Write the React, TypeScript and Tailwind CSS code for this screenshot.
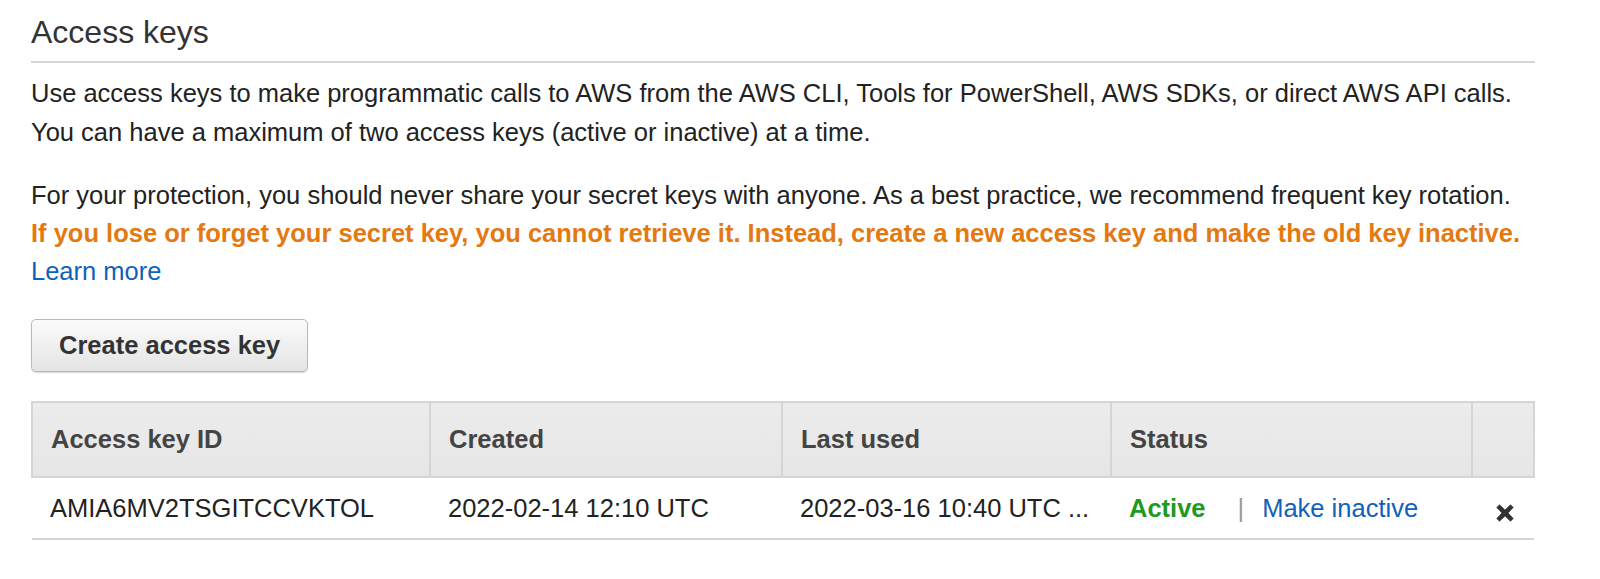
export default function App() {
  return (
    <div className="min-h-screen bg-white" style={{ fontFamily: '"Liberation Sans", Arial, sans-serif' }}>
      <div className="ml-[31px] w-[1504px] text-[#333]">
        <h2 className="pt-[14px] pb-[11px] text-[32px] leading-[36px] font-normal text-[#333] border-b-2 border-[#d5d5d5]">
          Access keys
        </h2>

        <p className="mt-[11px] text-[25.5px] leading-[39px] text-[#222]">
          Use access keys to make programmatic calls to AWS from the AWS CLI, Tools for PowerShell, AWS SDKs, or direct AWS API calls.
          <br />
          You can have a maximum of two access keys (active or inactive) at a time.
        </p>

        <div className="mt-[24px] text-[25.5px] leading-[38px] text-[#222]">
          <p>For your protection, you should never share your secret keys with anyone. As a best practice, we recommend frequent key rotation.</p>
          <p className="font-bold text-[#e47911]">
            If you lose or forget your secret key, you cannot retrieve it. Instead, create a new access key and make the old key inactive.
          </p>
          <a href="#" className="text-[#0f62b8]">Learn more</a>
        </div>

        <button className="mt-[29px] h-[53px] px-[27px] rounded-[5px] border border-[#b8b8b8] bg-gradient-to-b from-[#fbfbfb] to-[#e4e4e4] text-[25.5px] font-bold text-[#333] shadow-[0_1px_1px_rgba(0,0,0,0.15)]">
          Create access key
        </button>

        <table className="mt-[29px] w-full table-fixed border-collapse text-[25.5px]">
          <thead>
            <tr className="h-[75px] bg-gradient-to-b from-[#ececec] to-[#e6e6e6] text-left text-[#444]">
              <th className="w-[398px] border-2 border-[#d5d5d5] pl-[18px] font-bold">Access key ID</th>
              <th className="w-[352px] border-2 border-[#d5d5d5] pl-[18px] font-bold">Created</th>
              <th className="w-[329px] border-2 border-[#d5d5d5] pl-[18px] font-bold">Last used</th>
              <th className="w-[361px] border-2 border-[#d5d5d5] pl-[18px] font-bold">Status</th>
              <th className="border-2 border-[#d5d5d5]"></th>
            </tr>
          </thead>
          <tbody>
            <tr className="h-[62px] border-b-2 border-[#d5d5d5] text-[#222]">
              <td className="pl-[18px] whitespace-nowrap">AMIA6MV2TSGITCCVKTOL</td>
              <td className="pl-[18px] whitespace-nowrap">2022-02-14 12:10 UTC</td>
              <td className="pl-[18px] whitespace-nowrap">2022-03-16 10:40 UTC ...</td>
              <td className="pl-[18px] whitespace-nowrap">
                <span className="font-bold text-[#1e9a1e]">Active</span>
                <span className="ml-[32px] mr-[18px] text-[#999]">|</span>
                <a href="#" className="text-[#0f62b8]">Make inactive</a>
              </td>
              <td className="text-center">
                <svg width="22" height="22" viewBox="0 0 20 20" className="mt-[6px] ml-[4px] inline-block">
                  <path d="M2.5 5 L5 2.5 L10 7.2 L15 2.5 L17.5 5 L12.8 10 L17.5 15 L15 17.5 L10 12.8 L5 17.5 L2.5 15 L7.2 10 Z" fill="#333" stroke="#333" strokeWidth="0.6" strokeLinejoin="round" />
                </svg>
              </td>
            </tr>
          </tbody>
        </table>
      </div>
    </div>
  );
}
